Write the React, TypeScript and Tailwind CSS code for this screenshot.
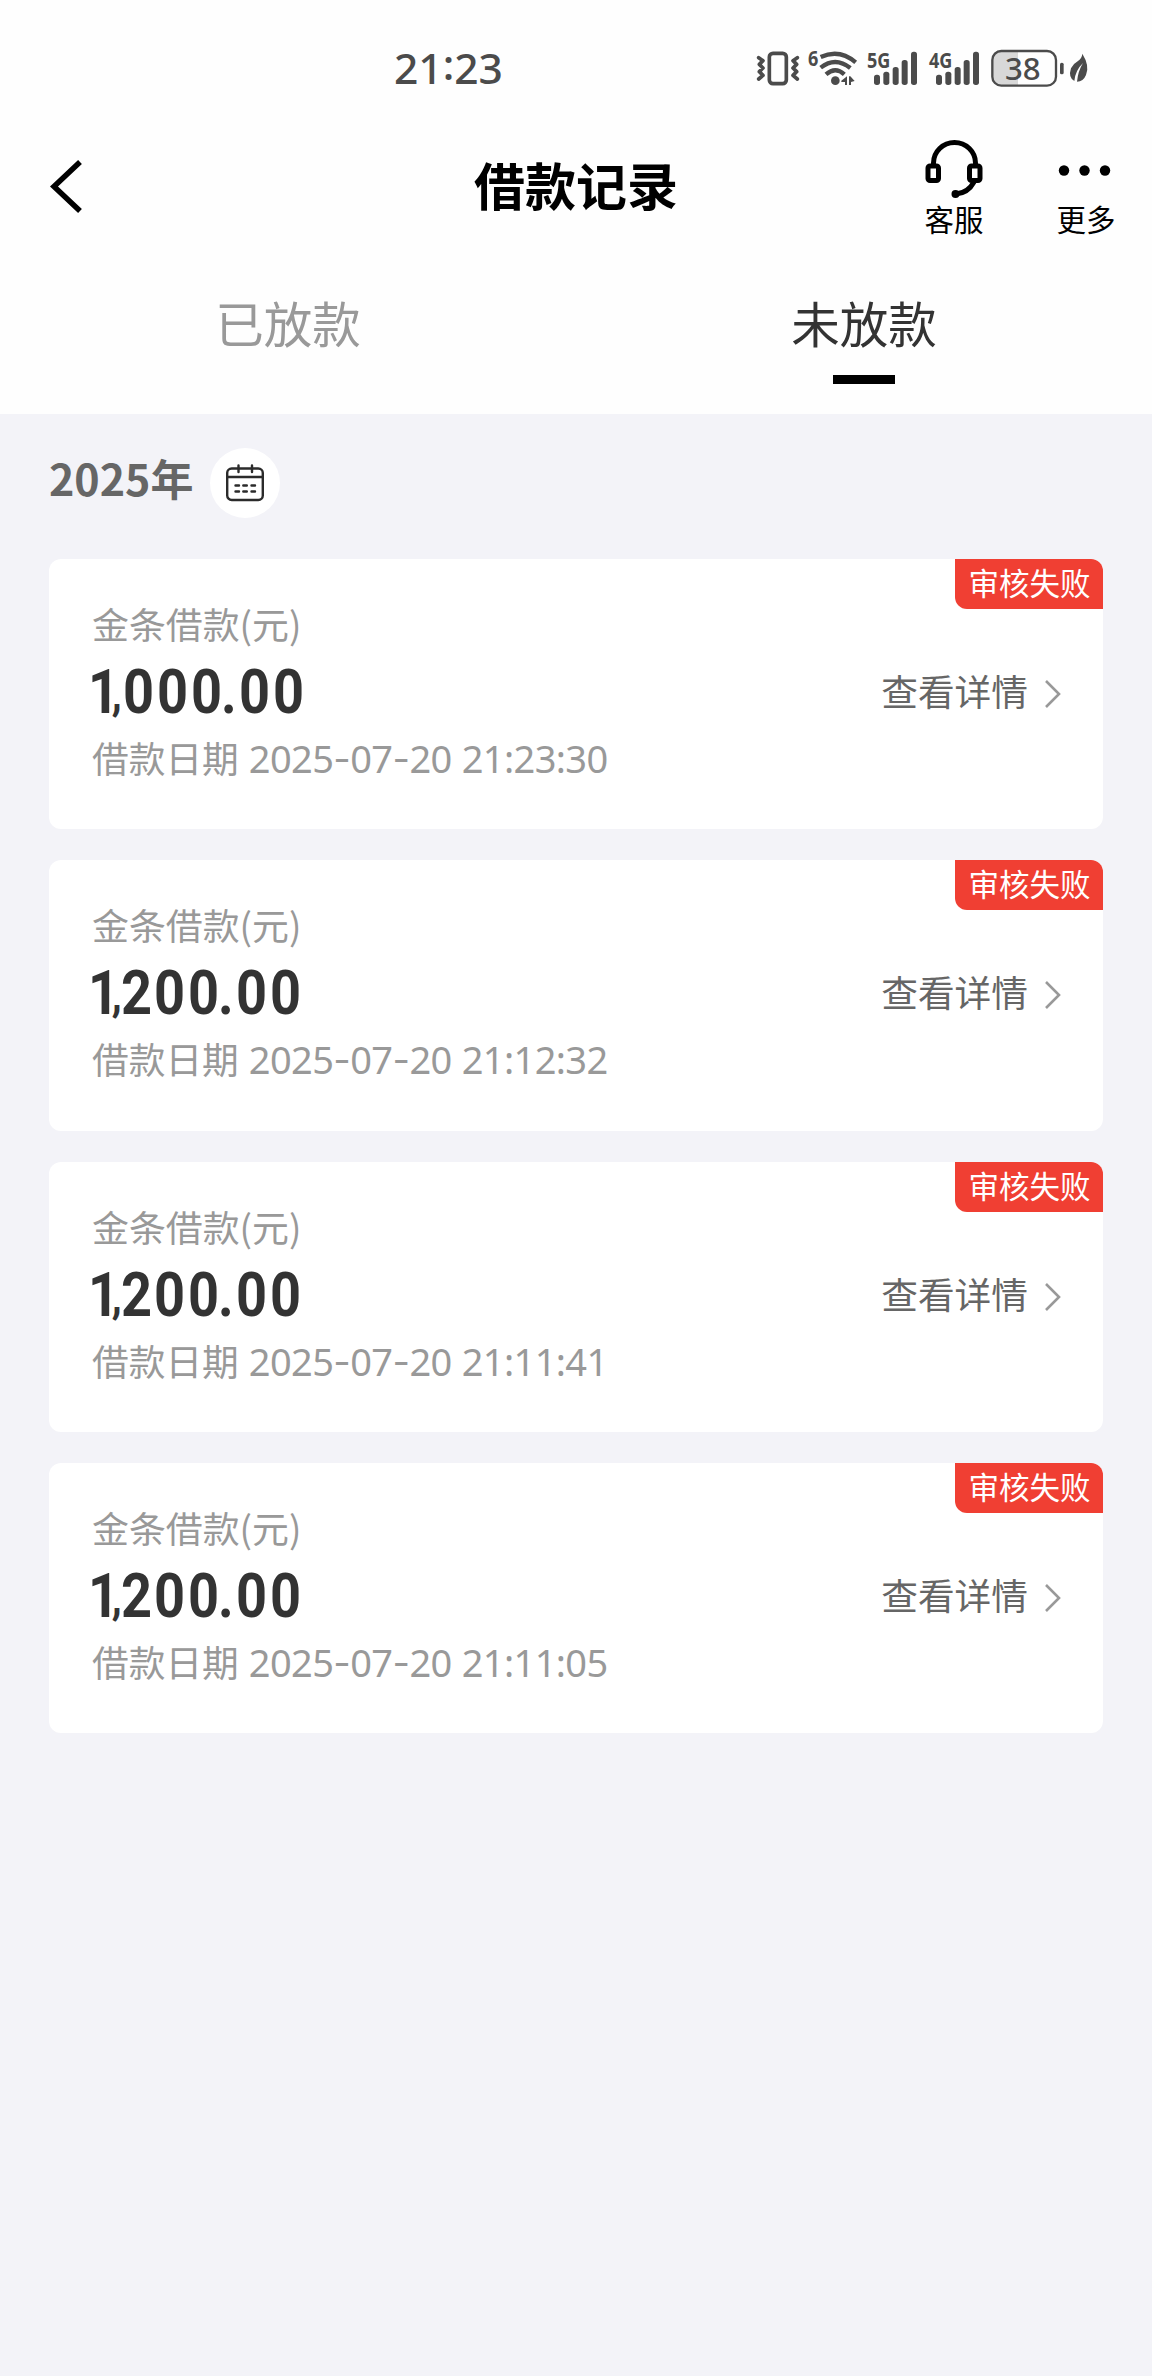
import clsx from 'clsx';

type LoanRecord = {
  id: number;
  amount: string;
  date: string;
  time: string;
};

const RECORDS: LoanRecord[] = [
  { id: 1, amount: '1,000.00', date: '2025-07-20', time: '21:23:30' },
  { id: 2, amount: '1,200.00', date: '2025-07-20', time: '21:12:32' },
  { id: 3, amount: '1,200.00', date: '2025-07-20', time: '21:11:41' },
  { id: 4, amount: '1,200.00', date: '2025-07-20', time: '21:11:05' },
];

export default function App() {
  return (
    <div className="flex h-[2376px] w-[1152px] flex-col bg-[#f3f3f8] font-['Noto_Sans_CJK_SC',sans-serif] text-[#333]">
      <div className="h-[414px] bg-[#fefefe]">
        <StatusBar />
        <Header />
        <Tabs />
      </div>
      <main className="px-[49px]">
        <YearFilter />
        <ul className="flex flex-col gap-[31px]">
          {RECORDS.map((r) => (
            <RecordCard key={r.id} record={r} />
          ))}
        </ul>
      </main>
    </div>
  );
}

function StatusBar() {
  return (
    <div className="flex h-[136px] items-center text-[#4b4b4b]">
      <div className="ml-[394px] flex w-[361px] font-['Noto_Sans',sans-serif] text-[42.5px] leading-[60px] font-medium">
        <span>21</span>
        <span className="-mt-[4px]">:</span>
        <span>23</span>
      </div>
      <div className="flex items-center">
        <VibrateIcon />
        <WifiIcon />
        <SignalIcon label="5G" />
        <SignalIcon label="4G" />
        <BatteryIcon level={38} />
        <LeafIcon />
      </div>
    </div>
  );
}

function Header() {
  return (
    <header className="grid h-[104px] grid-cols-[1fr_auto_1fr] items-center text-black">
      <svg className="mb-[3px] ml-[47px] h-[60px] w-[40px]" viewBox="0 0 40 60" fill="none" stroke="currentColor" strokeWidth="5.5">
        <path d="M33 5 L7 29.5 L33 54" />
      </svg>
      <h1 className="mb-[8px] text-[51px] leading-[70px] font-bold">借款记录</h1>
      <div className="flex justify-end gap-[72px] pr-[36px]">
        <div className="flex flex-col items-center">
          <HeadsetIcon />
          <span className="-mt-[2px] text-[29.5px] leading-[40px]">客服</span>
        </div>
        <div className="flex flex-col items-center">
          <svg className="h-[62px] w-[60px]" viewBox="0 0 60 62" fill="currentColor">
            <circle cx="8" cy="32.5" r="5.2" />
            <circle cx="28.5" cy="32.5" r="5.2" />
            <circle cx="49" cy="32.5" r="5.2" />
          </svg>
          <span className="-mt-[2px] text-[29.5px] leading-[40px]">更多</span>
        </div>
      </div>
    </header>
  );
}

function Tabs() {
  return (
    <nav className="grid grid-cols-2 text-[48.5px] leading-[70px]">
      <div className="flex flex-col items-center pt-[47px] text-[#999]">已放款</div>
      <div className="flex flex-col items-center pt-[47px]">
        未放款
        <span className="mt-[18px] h-[9px] w-[62px] bg-black" />
      </div>
    </nav>
  );
}

function YearFilter() {
  return (
    <div className="flex h-[145px] pt-[34px]">
      <span className="-mt-px text-[43px] leading-[60px] font-bold text-[#666]">2025年</span>
      <span className="ml-[17px] flex size-[70px] items-center justify-center rounded-full bg-white">
        <CalendarIcon />
      </span>
    </div>
  );
}

function RecordCard({ record }: { record: LoanRecord }) {
  return (
    <li className="relative flex h-[270.3px] items-start justify-between rounded-[12px] bg-white pt-[31px] pr-[41px] pl-[43px]">
      <div>
        <p className="text-[36.9px] leading-[66px] text-[#999]">金条借款(元)</p>
        <Amount value={record.amount} />
        <p className="flex text-[36.7px] leading-[62px] text-[#999]">
          借款日期
          <span className="mt-px ml-[10px] flex font-['Noto_Sans',sans-serif] text-[38px] tracking-[-0.6px]">
            {record.date.split('-').map((part, i) => (
              <span key={i} className="flex">
                {i > 0 && <span className="font-['Inter',sans-serif]">-</span>}
                {part}
              </span>
            ))}
            <span className="ml-[10px]">{record.time}</span>
          </span>
        </p>
      </div>
      <div className="mt-[67px] flex items-center">
        <span className="text-[36.7px] leading-[66px] text-[#666]">查看详情</span>
        <svg className="mt-[6px] ml-[16px] h-[30px] w-[18px]" viewBox="0 0 18 30" fill="none" stroke="#999" strokeWidth="2.6">
          <path d="M2 3 L15 16 L2 29" />
        </svg>
      </div>
      <span className="absolute top-0 right-0 h-[50px] w-[148px] rounded-tr-[12px] rounded-bl-[12px] bg-[#f03f33] pl-px text-center text-[30.5px] leading-[46px] text-white">
        审核失败
      </span>
    </li>
  );
}

function Amount({ value }: { value: string }) {
  return (
    <p className="flex h-[70px] pt-px font-['Roboto',sans-serif] text-[61.5px] leading-[70px] font-bold">
      {value.split('').map((c, i) => (
        <span
          key={i}
          className={clsx(
            'flex justify-center',
            c === '1' && 'w-[19px] pl-[4px]',
            c === ',' && 'w-[10.5px] pt-[2px] text-[46px]',
            c === '.' && 'w-[14px] pr-[3px]',
            c === '2' && 'w-[31px]',
            c === '0' && 'w-[34.1px]',
          )}
        >
          <span className="inline-block scale-x-[0.88]">{c}</span>
        </span>
      ))}
    </p>
  );
}

function VibrateIcon() {
  return (
    <svg className="h-[45px] w-[47px]" viewBox="45 45 141 135" fill="none" stroke="currentColor">
      <rect x="88" y="67" width="51" height="91" rx="11" strokeWidth="11" />
      <path
        d="M56 80 L69 89 L58 100 L69 111 L58 122 L69 133 L56 144 M172 80 L159 89 L170 100 L159 111 L170 122 L159 133 L172 144"
        strokeWidth="11"
        strokeLinejoin="round"
        strokeLinecap="round"
      />
    </svg>
  );
}

function WifiIcon() {
  return (
    <svg className="h-[45px] w-[64px] overflow-visible" viewBox="186 45 192 135" fill="currentColor">
      <text x="204" y="105" fontSize="64" fontWeight="700" textLength="31" lengthAdjust="spacingAndGlyphs" fontFamily="Noto Sans, sans-serif">
        6
      </text>
      <g fill="none" stroke="currentColor" strokeWidth="13">
        <path d="M242 78 Q298 52 347 94" />
        <path d="M242 110 Q286 75 331 111" />
        <path d="M258 130 Q286 105 313 130" />
      </g>
      <circle cx="286" cy="149" r="13" />
      <path d="M304 149 L321 136 V162 H315 V153 H304 Z M327 136 H331 L344 150 L333 153 V162 H327 Z" />
    </svg>
  );
}

function SignalIcon({ label }: { label: string }) {
  return (
    <svg className="h-[45px] w-[62px] overflow-visible" viewBox="378 45 186 135" fill="currentColor">
      <text x="381" y="110" fontSize="64" fontWeight="700" textLength="70" lengthAdjust="spacingAndGlyphs" fontFamily="Noto Sans, sans-serif">
        {label}
      </text>
      <rect x="402" y="131" width="18" height="31" rx="8" />
      <rect x="430" y="122" width="18" height="40" rx="8" />
      <rect x="458" y="108" width="18" height="54" rx="8" />
      <rect x="485" y="87" width="18" height="75" rx="8" />
      <rect x="513" y="62" width="18" height="100" rx="8" />
    </svg>
  );
}

function BatteryIcon({ level }: { level: number }) {
  return (
    <svg className="h-[45px] w-[76px] overflow-visible" viewBox="750 45 228 135">
      <path d="M834 60 V164 H784 Q758 164 758 136 V88 Q758 60 784 60 Z" fill="#d8d8d8" />
      <rect x="757" y="60" width="191" height="104" rx="27" fill="none" stroke="currentColor" strokeWidth="7" />
      <rect x="960" y="95" width="11" height="35" rx="5" fill="currentColor" />
      <text x="795" y="146" fontSize="92" fontWeight="500" textLength="107" lengthAdjust="spacingAndGlyphs" fontFamily="Noto Sans, sans-serif" fill="currentColor">
        {level}
      </text>
    </svg>
  );
}

function LeafIcon() {
  return (
    <svg className="h-[45px] w-[24px]" viewBox="978 45 72 135" fill="currentColor">
      <path d="M1027 68 Q1050 105 1038 132 Q1030 152 1011 152 Q1014 120 1029 96 Q1006 118 1003 150 Q984 140 993 112 Q1000 98 1013 91 Q1026 82 1027 68 Z" />
    </svg>
  );
}

function HeadsetIcon() {
  return (
    <svg className="h-[62px] w-[60px]" viewBox="0 0 60 62" fill="none" stroke="currentColor" strokeWidth="5">
      <path d="M9.5 27 V25 A21 20.5 0 0 1 51.5 25 V27" />
      <rect x="4" y="28" width="10.5" height="14.5" rx="2" />
      <rect x="45.5" y="28" width="10.5" height="14.5" rx="2" />
      <path d="M50 44 Q44 55 32 56" />
      <circle cx="31.5" cy="56" r="4" fill="currentColor" stroke="none" />
    </svg>
  );
}

function CalendarIcon() {
  return (
    <svg className="h-[38px] w-[40px]" viewBox="0 0 40 38" fill="none" stroke="#2b2b2b" strokeWidth="2.4">
      <rect x="2.2" y="4.5" width="35.6" height="31.5" rx="4.5" />
      <path d="M2 13 H38" />
      <path d="M13.5 1.5 V8 M27 1.5 V8" strokeLinecap="round" />
      <path d="M10.5 21.5 H14 M18.3 21.5 H21.8 M26.5 21.5 H30 M10.5 27.5 H14 M18.3 27.5 H21.8 M26.5 27.5 H30" strokeLinecap="round" />
    </svg>
  );
}
